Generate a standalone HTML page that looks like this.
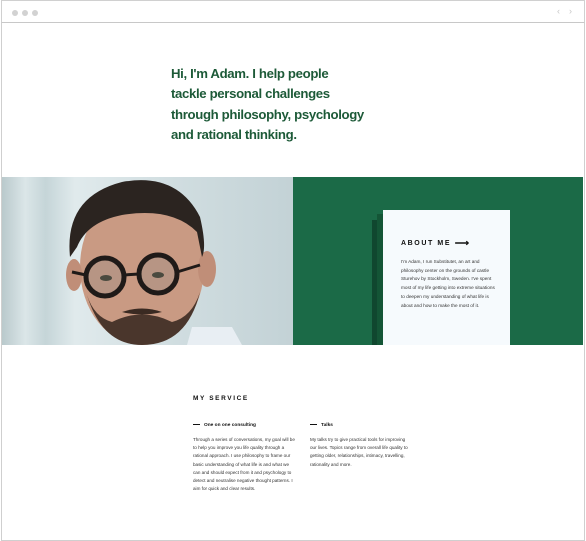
<!DOCTYPE html>
<html><head><style>
*{margin:0;padding:0;box-sizing:border-box}
body{width:586px;height:541px;background:#fff;font-family:"Liberation Sans",sans-serif;position:relative;overflow:hidden}
.frame{position:absolute;left:1px;top:0;width:584px;height:541px;border:1px solid #cfcfcf;border-top:none}
.bar{position:absolute;left:1px;top:0;width:584px;height:23px;border:1px solid #d0d0d0;border-bottom:1px solid #c8c8c8;background:#fff}
.dot{position:absolute;top:9px;width:6px;height:6px;border-radius:50%;background:#d2d2d2}
h1{position:absolute;left:171px;top:64px;font-size:13.2px;line-height:20.3px;color:#1d5a38;font-weight:bold;letter-spacing:-0.35px;white-space:nowrap}
.photo{position:absolute;left:2px;top:177px;width:291px;height:168px;overflow:hidden;background:linear-gradient(90deg,#b9c9cc 0%,#dbe6e8 8%,#c5d5d8 15%,#e0eaec 25%,#d0dde0 60%,#c3d2d6 100%)}
.green{position:absolute;left:293px;top:177px;width:290px;height:168px;background:#1b6a47}
.shadow{position:absolute;left:372px;top:220px;width:12px;height:125px;background:#10472f}
.shadow2{position:absolute;left:377px;top:214px;width:8px;height:131px;background:#145536}
.card{position:absolute;left:383px;top:210px;width:127px;height:135px;background:#f6fafd;padding:28px 0 0 18px}
.card h2{font-size:7px;letter-spacing:1.6px;font-weight:bold;color:#111}
.card p{font-size:4.7px;line-height:8.7px;color:#333;margin-top:9px;width:94px}
.svc{position:absolute;left:193px;top:395px;font-size:6.5px;letter-spacing:1.6px;font-weight:bold;color:#111}
.col{position:absolute;top:423px;width:102px}
.col h3{font-size:4.8px;font-weight:bold;color:#111;margin-bottom:8px}
.col h3:before{content:"";display:inline-block;width:7px;height:1.2px;background:#111;vertical-align:middle;margin-right:4px}
.col p{font-size:4.6px;line-height:8.2px;color:#333}
</style></head><body>
<div class="frame"></div>
<div class="bar">
<div class="dot" style="left:10px"></div><div class="dot" style="left:20px"></div><div class="dot" style="left:30px"></div>
<div style="position:absolute;right:24px;top:5px;font-size:9px;color:#c8c8c8">&#8249;</div>
<div style="position:absolute;right:12px;top:5px;font-size:9px;color:#c8c8c8">&#8250;</div>
</div>
<h1>Hi, I'm Adam. I help people<br>tackle personal challenges<br>through philosophy, psychology<br>and rational thinking.</h1>
<div class="photo">
<svg width="291" height="168" viewBox="0 0 291 168">
<path d="M190 150 L230 150 L240 168 L185 168Z" fill="#e8eef3"/>
<ellipse cx="140" cy="90" rx="62" ry="78" fill="#c99a83"/>
<ellipse cx="72" cy="98" rx="8" ry="16" fill="#c08e78"/>
<ellipse cx="205" cy="92" rx="9" ry="18" fill="#c08e78"/>
<path d="M68 80 Q62 20 120 5 Q175 -5 198 40 Q205 70 200 80 L195 55 Q170 30 120 38 Q85 45 75 70Z" fill="#2b2420"/>
<path d="M85 118 Q100 168 140 168 Q185 168 198 115 Q190 140 170 145 Q140 130 110 145 Q92 140 85 118Z" fill="#4a362c"/>
<path d="M120 135 Q140 128 160 135 Q140 140 120 135Z" fill="#3a2a22"/>
<circle cx="103" cy="100" r="19" fill="#b79584" stroke="#1f1a18" stroke-width="5"/>
<circle cx="156" cy="97" r="19" fill="#b79584" stroke="#1f1a18" stroke-width="5"/>
<path d="M122 98 L137 97 M84 98 L70 95 M175 95 L198 88" stroke="#1f1a18" stroke-width="3"/>
<ellipse cx="104" cy="101" rx="6" ry="3" fill="#4a4a3f"/>
<ellipse cx="156" cy="98" rx="6" ry="3" fill="#4a4a3f"/>
</svg>
</div>
<div class="green"></div>
<div class="shadow"></div><div class="shadow2"></div>
<div class="card"><h2>ABOUT ME <span style="letter-spacing:0;font-size:10px;vertical-align:-1px">&#10230;</span></h2>
<p>I'm Adam, I run Substitutet, an art and philosophy center on the grounds of castle Sturehov by Stockholm, Sweden. I've spent most of my life getting into extreme situations to deepen my understanding of what life is about and how to make the most of it.</p></div>
<div class="svc">MY SERVICE</div>
<div class="col" style="left:193px"><h3>One on one consulting</h3><p>Through a series of conversations, my goal will be to help you improve you life quality through a rational approach. I use philosophy to frame our basic understanding of what life is and what we can and should expect from it and psychology to detect and neutralise negative thought patterns. I aim for quick and clear results.</p></div>
<div class="col" style="left:310px"><h3>Talks</h3><p>My talks try to give practical tools for improving our lives. Topics range from overall life quality to getting older, relationships, intimacy, travelling, rationality and more.</p></div>
</body></html>
